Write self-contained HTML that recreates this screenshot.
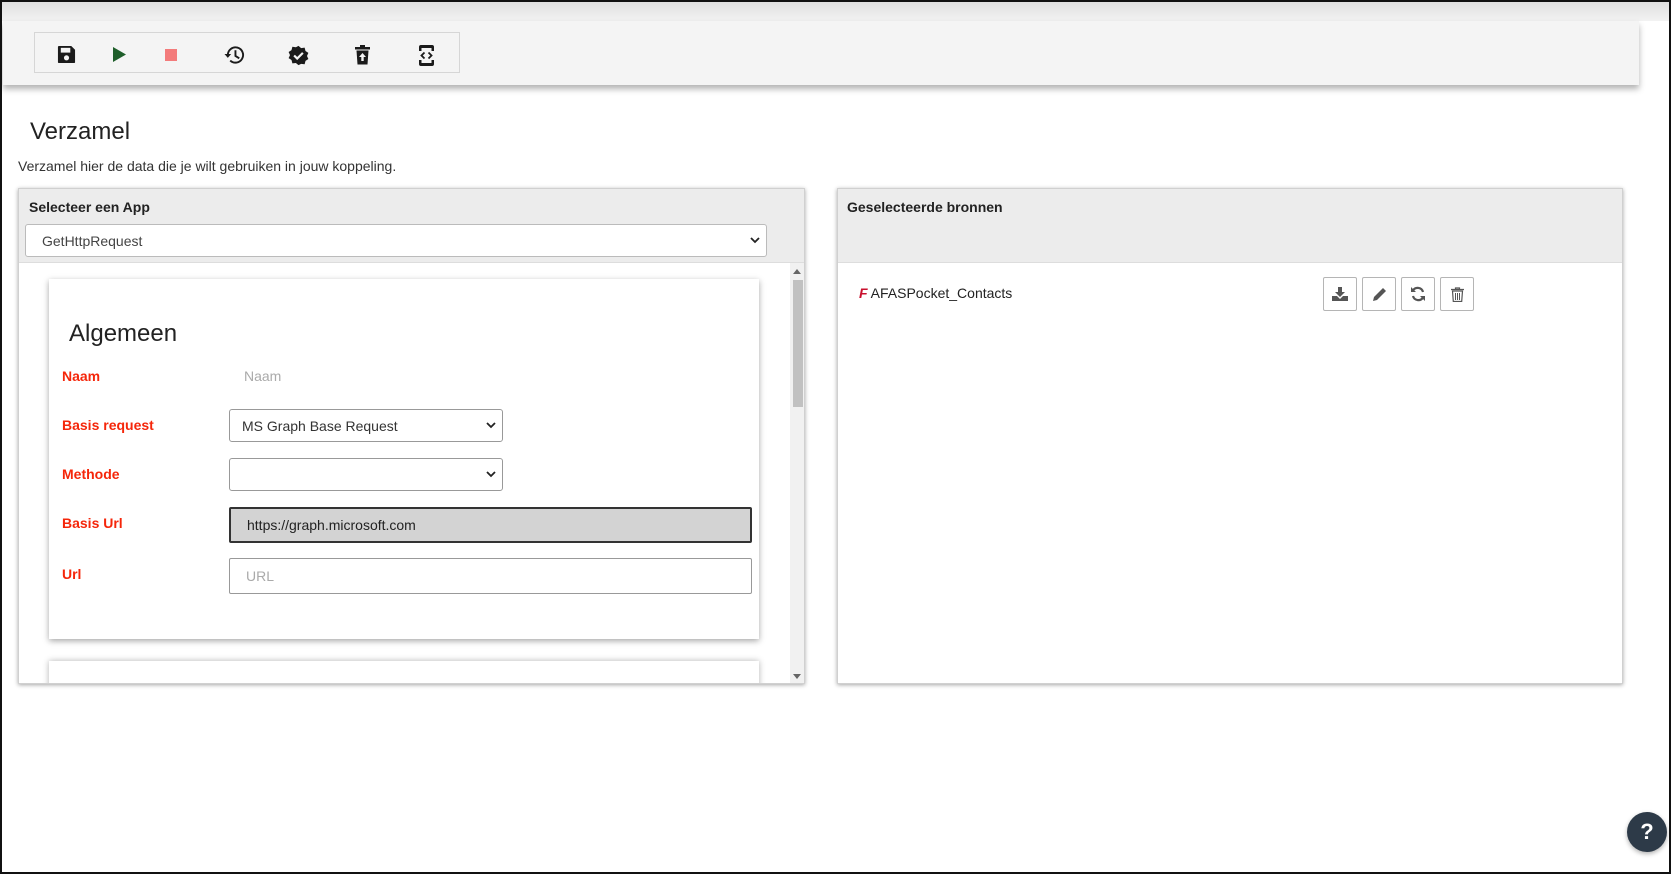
<!DOCTYPE html>
<html><head><style>
*{box-sizing:border-box;margin:0;padding:0}
body{width:1671px;height:874px;overflow:hidden;background:#fff;font-family:"Liberation Sans",sans-serif;position:relative;color:#222}
.frame{position:absolute;inset:0;border:2px solid #111;pointer-events:none;z-index:10}
.abs{position:absolute}
.topg{left:0;top:0;width:1671px;height:21px;background:linear-gradient(#ddd,#f2f2f2)}
.tb{left:3px;top:21px;width:1636px;height:64px;background:#f4f4f4;box-shadow:0 4px 6px rgba(0,0,0,.3)}
.tbox{left:34px;top:32px;width:426px;height:41px;border:1px solid #d6d6d6}
.ic{position:absolute;top:45px}
.panel{background:#fff;box-shadow:0 1px 4px rgba(0,0,0,.35);border:1px solid #d0d0d0}
.ph{background:#ececec;border-bottom:1px solid #ddd}
.lbl{position:absolute;left:62px;color:#f5260a;font-weight:bold;font-size:14px}
.inp{position:absolute;left:229px;border:1px solid #999;border-radius:2px;background:#fff;font-size:14px;color:#333;padding-left:12px;display:flex;align-items:center}
.chev{position:absolute;right:6px;top:50%;margin-top:-4px}
.btn{position:absolute;top:277px;width:34px;height:34px;border:1px solid #b5b5b5;border-radius:2px;background:#fff;display:flex;align-items:center;justify-content:center}
</style></head><body>
<div class="frame"></div>
<div class="abs topg"></div>
<div class="abs tb"></div>
<div class="abs tbox"></div>
<svg class="ic" style="left:57px" width="19" height="19" viewBox="0 0 20 20"><path d="M2 1h13l4 4v13a1 1 0 0 1-1 1H2a1 1 0 0 1-1-1V2a1 1 0 0 1 1-1z" fill="#1b1b1b"/><rect x="4" y="3" width="10" height="5" fill="#f4f4f4"/><circle cx="10" cy="13.5" r="2.7" fill="#f4f4f4"/></svg>
<svg class="ic" style="left:113px;top:47px" width="13" height="15" viewBox="0 0 13 15"><path d="M0 0l13 7.5L0 15z" fill="#1e5e2a"/></svg>
<div class="abs" style="left:165px;top:49px;width:12px;height:12px;background:#f37b7b"></div>
<svg class="ic" style="left:224px" width="21" height="20" viewBox="0 0 22 20"><path d="M4 10a8 8 0 1 1 2.5 5.8" fill="none" stroke="#1b1b1b" stroke-width="2"/><path d="M0.5 9h7l-3.5 4z" fill="#1b1b1b"/><path d="M12 5v6l4 2.5" fill="none" stroke="#1b1b1b" stroke-width="2"/></svg>
<svg class="ic" style="left:288px" width="21" height="21" viewBox="0 0 24 24"><path d="M12 1l3 2.5 4-.5 1 3.8 3.3 2.2-1.6 3.5 1.6 3.5-3.3 2.2-1 3.8-4-.5L12 23l-3-2.5-4 .5-1-3.8L.7 15l1.6-3.5L.7 8l3.3-2.2L5 2l4 .5z" fill="#1b1b1b"/><path d="M7 12l3.5 3.5L17 9" fill="none" stroke="#f4f4f4" stroke-width="2.5"/></svg>
<svg class="ic" style="left:355px" width="15" height="20" viewBox="0 0 15 20"><rect x="0" y="2" width="15" height="2.5" fill="#1b1b1b"/><rect x="5" y="0" width="5" height="2.5" fill="#1b1b1b"/><path d="M1.5 5.5h12l-1 14h-10z" fill="#1b1b1b"/><path d="M7.5 8l-3.5 4h2.3v4h2.4v-4H11z" fill="#f4f4f4"/></svg>
<svg class="ic" style="left:419px" width="15" height="21" viewBox="0 0 15 21"><path d="M2 0h11a2 2 0 0 1 2 2v4h-2.5V3h-10v3H0V2a2 2 0 0 1 2-2zM0 15h2.5v3h10v-3H15v4a2 2 0 0 1-2 2H2a2 2 0 0 1-2-2z" fill="#1b1b1b"/><path d="M5.5 7.5L2.5 10.5l3 3M9.5 7.5l3 3-3 3" fill="none" stroke="#1b1b1b" stroke-width="1.8"/></svg>

<div class="abs" style="left:30px;top:118px;font-size:24px;color:#222">Verzamel</div>
<div class="abs" style="left:18px;top:158px;font-size:14px;color:#333">Verzamel hier de data die je wilt gebruiken in jouw koppeling.</div>

<div class="abs panel" style="left:18px;top:188px;width:787px;height:496px;overflow:hidden">
 <div class="ph" style="height:74px;position:relative">
  <div class="abs" style="left:10px;top:10px;font-weight:bold;font-size:14px;color:#222">Selecteer een App</div>
  <div class="inp" style="left:6px;top:35px;width:742px;height:33px;border-color:#bbb;border-radius:3px;padding-left:16px;color:#444">GetHttpRequest
   <svg class="chev" width="10" height="7" viewBox="0 0 10 7"><path d="M1 1l4 4 4-4" fill="none" stroke="#222" stroke-width="1.8"/></svg></div>
 </div>
 <div class="abs" style="left:771px;top:74px;width:15px;height:422px;background:#f1f1f1"></div>
 <div class="abs" style="left:774px;top:91px;width:10px;height:127px;background:#c1c1c1"></div>
 <svg class="abs" style="left:774px;top:80px" width="9" height="6"><path d="M0 5h8L4 0z" fill="#666"/></svg>
 <svg class="abs" style="left:774px;top:485px" width="9" height="6"><path d="M0 0h8L4 5z" fill="#666"/></svg>
 <div class="abs" style="left:30px;top:90px;width:710px;height:360px;background:#fff;box-shadow:0 2px 6px rgba(0,0,0,.35)"></div>
 <div class="abs" style="left:30px;top:472px;width:710px;height:40px;background:#fff;box-shadow:0 0 6px rgba(0,0,0,.3)"></div>
</div>
<div class="abs" style="left:69px;top:320px;font-size:24px;color:#222">Algemeen</div>
<div class="lbl" style="top:368px">Naam</div>
<div class="abs" style="left:244px;top:368px;font-size:14px;color:#aaa">Naam</div>
<div class="lbl" style="top:417px">Basis request</div>
<div class="inp" style="top:409px;width:274px;height:33px;border-radius:3px">MS Graph Base Request<svg class="chev" width="10" height="7" viewBox="0 0 10 7"><path d="M1 1l4 4 4-4" fill="none" stroke="#222" stroke-width="1.8"/></svg></div>
<div class="lbl" style="top:466px">Methode</div>
<div class="inp" style="top:458px;width:274px;height:33px;border-radius:3px"><svg class="chev" width="10" height="7" viewBox="0 0 10 7"><path d="M1 1l4 4 4-4" fill="none" stroke="#222" stroke-width="1.8"/></svg></div>
<div class="lbl" style="top:515px">Basis Url</div>
<div class="inp" style="top:507px;width:523px;height:36px;background:#d3d3d3;border:2px solid #333;padding-left:16px;color:#222">https://graph.microsoft.com</div>
<div class="lbl" style="top:566px">Url</div>
<div class="inp" style="top:558px;width:523px;height:36px;padding-left:16px;color:#aaa">URL</div>

<div class="abs panel" style="left:837px;top:188px;width:786px;height:496px">
 <div class="ph" style="height:74px;position:relative">
  <div class="abs" style="left:9px;top:10px;font-weight:bold;font-size:14px;color:#222">Geselecteerde bronnen</div>
 </div>
</div>
<div class="abs" style="left:859px;top:285px;font-size:14px;color:#222"><b style="color:#c8102e;font-style:italic">F</b> AFASPocket_Contacts</div>
<div class="btn" style="left:1323px"><svg width="16" height="14" viewBox="0 0 16 14"><path d="M6 0h4v5h3l-5 5-5-5h3z" fill="#555"/><path d="M0 9h5l3 3 3-3h5v5H0z" fill="#555"/></svg></div>
<div class="btn" style="left:1362px"><svg width="15" height="15" viewBox="0 0 15 15"><path d="M11 1l3 3-9 9-4 1 1-4z" fill="#555"/></svg></div>
<div class="btn" style="left:1401px"><svg width="16" height="16" viewBox="0 0 16 16"><path d="M13 6a5.5 5.5 0 0 0-10-1.5M3 10a5.5 5.5 0 0 0 10 1.5" fill="none" stroke="#555" stroke-width="2.2"/><path d="M1 1v5h5zM15 15v-5h-5z" fill="#555"/></svg></div>
<div class="btn" style="left:1440px"><svg width="13" height="15" viewBox="0 0 13 15"><path d="M0 2.5h13M4.5 2.5V1h4v1.5" fill="none" stroke="#555" stroke-width="1.2"/><path d="M1.5 4h10l-.8 10.5H2.3z" fill="none" stroke="#555" stroke-width="1.2"/><path d="M4.5 6v7M6.5 6v7M8.5 6v7" stroke="#555" stroke-width="1"/></svg></div>

<div class="abs" style="left:1627px;top:812px;width:40px;height:40px;border-radius:50%;background:#2d3a48;color:#fff;font-size:22px;font-weight:bold;text-align:center;line-height:40px;box-shadow:0 2px 5px rgba(0,0,0,.3)">?</div>
</body></html>
